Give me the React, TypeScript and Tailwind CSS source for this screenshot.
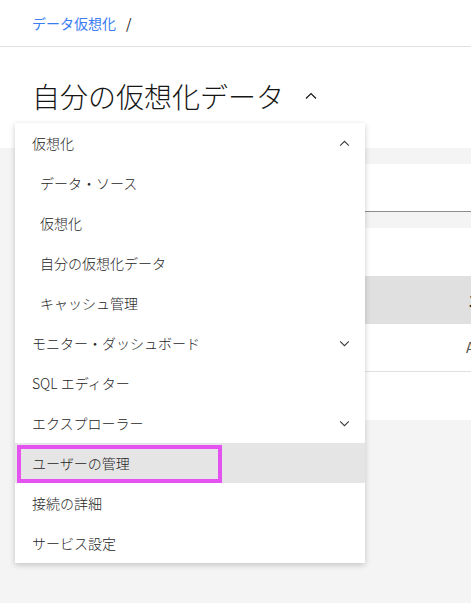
import React from 'react';

const FONT = { fontFamily: '"Noto Sans CJK JP", "Noto Sans", sans-serif' };

function Chevron({ up, className }: { up?: boolean; className?: string }) {
  return (
    <svg viewBox="0 0 12 8" className={className} fill="none" stroke="currentColor" strokeWidth={1.2}>
      {up ? <polyline points="1,6.5 6,1.5 11,6.5" /> : <polyline points="1,1.5 6,6.5 11,1.5" />}
    </svg>
  );
}

type Item = { label: string; indent?: boolean; chevron?: 'up' | 'down'; active?: boolean };

const ITEMS: Item[] = [
  { label: '仮想化', chevron: 'up' },
  { label: 'データ・ソース', indent: true },
  { label: '仮想化', indent: true },
  { label: '自分の仮想化データ', indent: true },
  { label: 'キャッシュ管理', indent: true },
  { label: 'モニター・ダッシュボード', chevron: 'down' },
  { label: 'SQL エディター' },
  { label: 'エクスプローラー', chevron: 'down' },
  { label: 'ユーザーの管理', active: true },
  { label: '接続の詳細' },
  { label: 'サービス設定' },
];

function Menu() {
  return (
    <div className="absolute left-[15px] top-[123px] w-[350px] bg-white shadow-[0_2px_6px_rgba(0,0,0,0.2)]">
      {ITEMS.map((it, i) => (
        <div
          key={i}
          className={`relative flex h-[40px] items-center justify-between pr-[15px] text-[14px] font-light text-[#262626] ${
            it.indent ? 'pl-[25px]' : 'pl-[17px]'
          } ${it.active ? 'bg-[#e5e5e5]' : ''}`}
        >
          {it.active && (
            <div className="absolute left-[2px] top-[2px] h-[38px] w-[205px] border-[4px] border-[#e552f2]" />
          )}
          <span className="relative">{it.label}</span>
          {it.chevron && <Chevron up={it.chevron === 'up'} className="h-[7px] w-[11px] text-[#393939]" />}
        </div>
      ))}
    </div>
  );
}

export default function App() {
  return (
    <div className="relative h-[603px] w-[471px] overflow-hidden bg-[#f4f4f4]" style={FONT}>
      <div className="bg-white">
        <div className="flex h-[47px] items-center gap-[10px] border-b border-[#e0e0e0] pl-[32px] text-[14px]">
          <span className="text-[#3a7cf2]">データ仮想化</span>
          <span className="text-[#161616]">/</span>
        </div>
        <div className="flex h-[101px] items-center gap-[20px] pl-[32px] pb-[3px]">
          <h1 className="text-[28px] font-light text-[#161616]">自分の仮想化データ</h1>
          <Chevron up className="h-[8px] w-[14px] text-[#161616]" />
        </div>
      </div>
      <div className="pl-[32px] pt-[16px]">
        <div className="h-[48px] border-b border-[#8d8d8d] bg-white" />
        <div className="mt-[16px] bg-white">
          <div className="h-[48px]" />
          <div className="flex h-[48px] items-center bg-[#e0e0e0] pl-[436px] text-[14px] font-semibold text-[#161616]">ス</div>
          <div className="flex h-[48px] items-center border-b border-[#e0e0e0] pl-[434px] text-[14px] text-[#525252]">A</div>
          <div className="h-[48px]" />
        </div>
      </div>
      <Menu />
    </div>
  );
}
